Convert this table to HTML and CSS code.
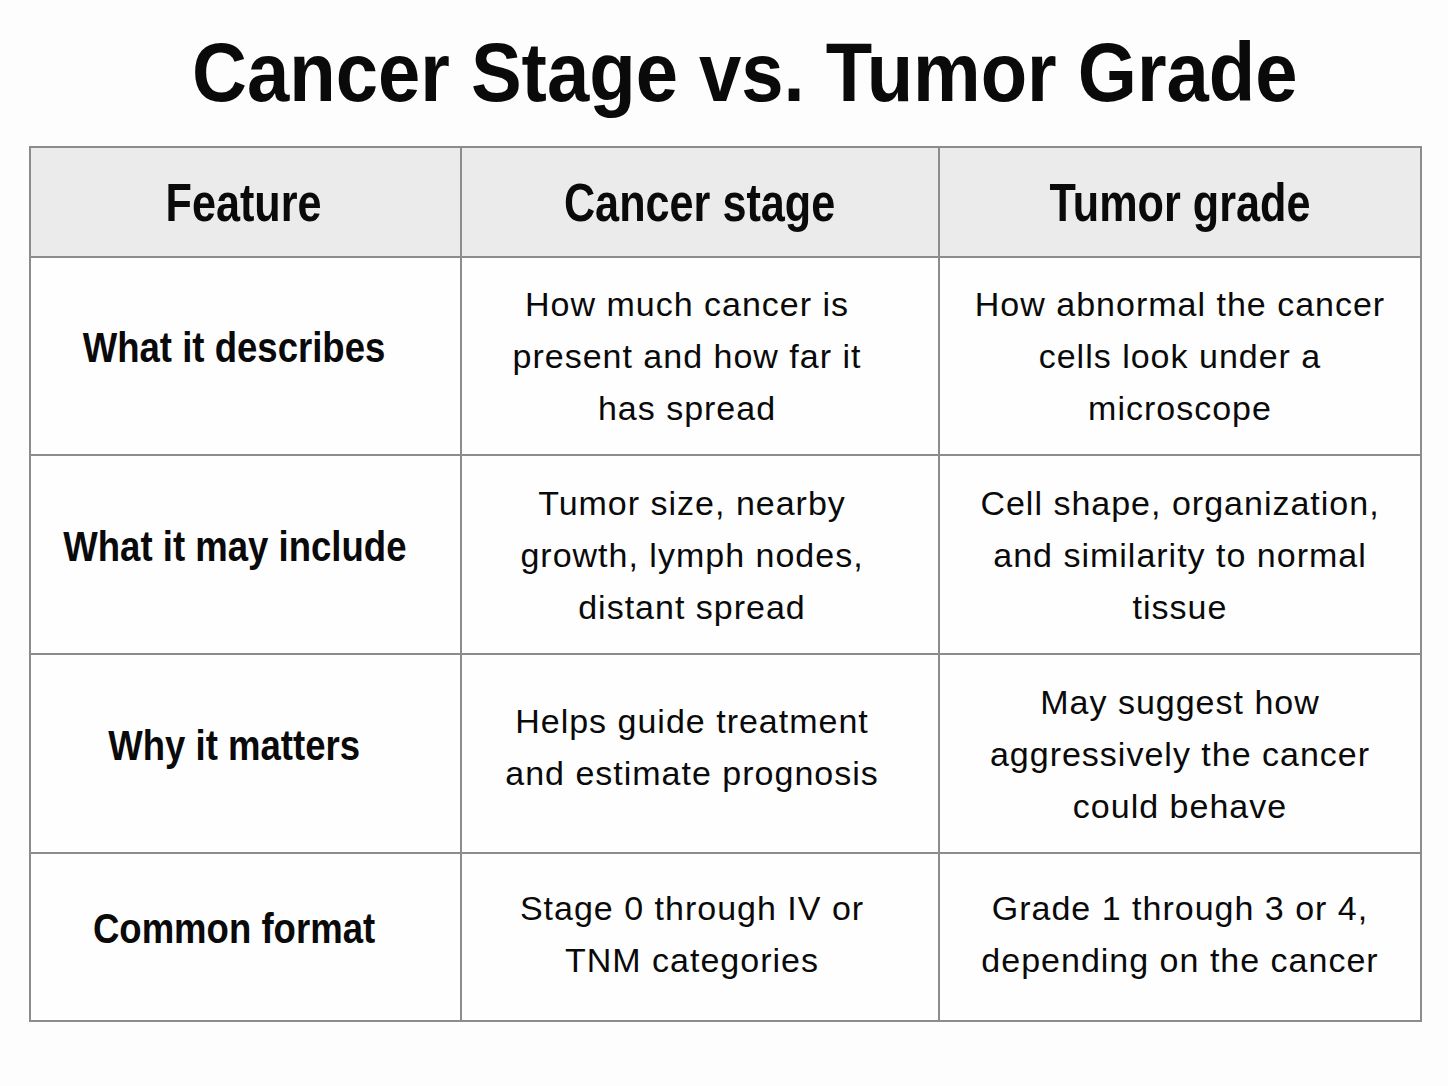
FILE: index.html
```html
<!DOCTYPE html>
<html lang="en">
<head>
<meta charset="utf-8">
<title>Cancer Stage vs. Tumor Grade</title>
<link rel="stylesheet" href="styles.css">
</head>
<body>
<main class="page">
  <h1 class="title"><span class="squeeze">Cancer Stage vs. Tumor Grade</span></h1>
  <table class="grid">
    <colgroup>
      <col class="c1"><col class="c2"><col class="c3">
    </colgroup>
    <thead>
      <tr class="head-row">
        <th><div class="inner feat-head"><span class="squeeze-h">Feature</span></div></th>
        <th><div class="inner"><span class="squeeze-h">Cancer stage</span></div></th>
        <th><div class="inner"><span class="squeeze-h">Tumor grade</span></div></th>
      </tr>
    </thead>
    <tbody>
      <tr class="r1">
        <td class="feat"><div class="inner feat-in"><span class="squeeze-f">What it describes</span></div></td>
        <td class="body"><div class="inner mid shift">How much cancer is<br>present and how far it<br>has spread</div></td>
        <td class="body"><div class="inner">How abnormal the cancer<br>cells look under a<br>microscope</div></td>
      </tr>
      <tr class="r2">
        <td class="feat"><div class="inner feat-in"><span class="squeeze-f">What it may include</span></div></td>
        <td class="body"><div class="inner mid">Tumor size, nearby<br>growth, lymph nodes,<br>distant spread</div></td>
        <td class="body"><div class="inner">Cell shape, organization,<br>and similarity to normal<br>tissue</div></td>
      </tr>
      <tr class="r3">
        <td class="feat"><div class="inner feat-in"><span class="squeeze-f">Why it matters</span></div></td>
        <td class="body"><div class="inner mid lift">Helps guide treatment<br>and estimate prognosis</div></td>
        <td class="body"><div class="inner">May suggest how<br>aggressively the cancer<br>could behave</div></td>
      </tr>
      <tr class="r4">
        <td class="feat"><div class="inner feat-in"><span class="squeeze-f">Common format</span></div></td>
        <td class="body"><div class="inner mid lift-s">Stage 0 through IV or<br>TNM categories</div></td>
        <td class="body"><div class="inner lift-s">Grade 1 through 3 or 4,<br>depending on the cancer</div></td>
      </tr>
    </tbody>
  </table>
</main>
</body>
</html>
```
FILE: styles.css
```css
html, body {
  margin: 0;
  padding: 0;
  background: #fdfdfd;
}

body {
  font-family: "Liberation Sans", Arial, sans-serif;
  color: #0a0a0a;
}

.page {
  width: 1448px;
  height: 1086px;
  padding-top: 30px;
  box-sizing: border-box;
}

.title {
  margin: 0 0 32px 0;
  padding-left: 42px;
  font-size: 84px;
  line-height: 84px;
  font-weight: 700;
  text-align: center;
  white-space: nowrap;
}

.squeeze {
  display: inline-block;
  transform: scaleX(0.905);
}

.grid {
  margin-left: 29px;
  width: 1391px;
  border-collapse: collapse;
  table-layout: fixed;
}

.c1 { width: 431px; }
.c2 { width: 478px; }
.c3 { width: 482px; }

.grid th,
.grid td {
  border: 2px solid #8c8c8c;
  text-align: center;
  vertical-align: middle;
  padding: 0;
  white-space: nowrap;
}

.inner {
  display: block;
}

.head-row th {
  height: 108px;
  background: #ebebeb;
  font-size: 54px;
  font-weight: 700;
  line-height: 60px;
}

.feat-head {
  padding-right: 4px;
}

.squeeze-h {
  display: inline-block;
  transform: scaleX(0.8);
}

.r1 td { height: 196px; }
.r2 td { height: 197px; }
.r3 td { height: 197px; }
.r4 td { height: 166px; }

.grid td {
  background: #fefefe;
}

.feat {
  font-size: 43px;
  font-weight: 700;
  line-height: 50px;
}

.feat-in {
  padding-right: 22px;
  padding-bottom: 18px;
}

.squeeze-f {
  display: inline-block;
  transform: scaleX(0.85);
}

.body {
  font-size: 34px;
  line-height: 52px;
  letter-spacing: 1px;
  font-weight: 400;
}

.mid {
  padding-right: 16px;
}

.mid.shift {
  padding-right: 26px;
}

.lift {
  padding-bottom: 14px;
}

.lift-s {
  padding-bottom: 6px;
}
```
